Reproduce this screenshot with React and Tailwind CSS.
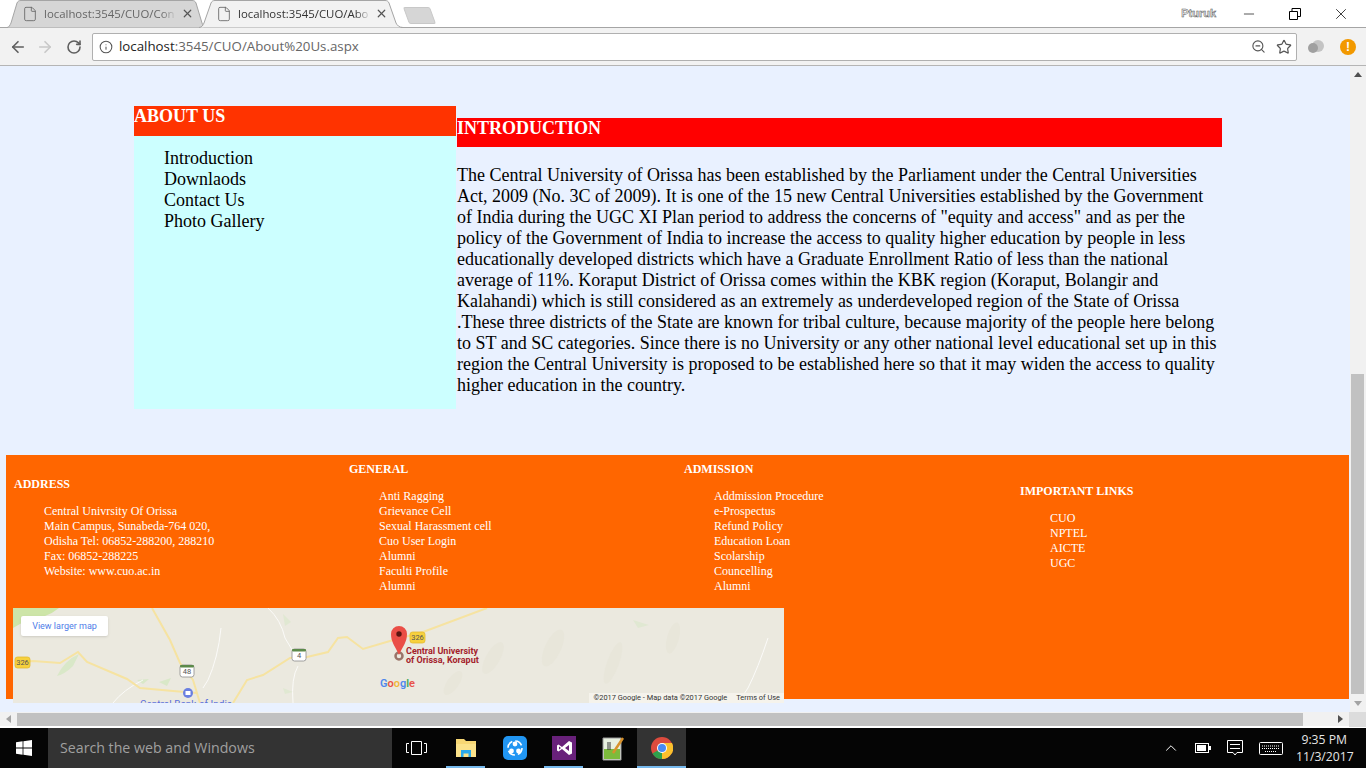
import React from 'react';
import { ArrowLeft, ArrowRight, RotateCw, Info, ZoomOut, Star, X, Minus, File, ChevronUp } from 'lucide-react';

const serif = { fontFamily: '"Liberation Serif", serif' };

const Tab = ({ title, active }) => (
  <div className={`relative flex items-center h-[27px] w-[200px] pl-[13px] pr-[15px] -mr-[6px] ${active ? 'text-[#333] z-10' : 'text-[#666]'}`}>
    <svg className="absolute top-0 -left-[4px]" width="206" height="28" viewBox="0 0 206 28">
      <path d={active
        ? 'M0 27.5 C3 27.5 4 25 5 23 L12 3 C13 1 14 0.5 16 0.5 L186 0.5 C188 0.5 189 1 190 3 L197 23 C198 25 200 27.5 204 27.5'
        : 'M2 27.5 C4 27.5 5 25 6 23 L12 3 C13 1 14 0.5 16 0.5 L187 0.5 C189 0.5 190 1 191 3 L197 23 C198 25 198 27.5 199 27.5'}
        fill={active ? '#f2f2f2' : '#d6d6d6'} stroke="#a5a5a5" />
    </svg>
    <File size={16} strokeWidth={1.3} className="relative mr-[6px] shrink-0 text-[#666]" />
    <span className="relative text-[11.4px] leading-none overflow-hidden whitespace-nowrap flex-1 font-['Open_Sans',sans-serif] [mask-image:linear-gradient(to_right,black_88%,transparent)]">{title}</span>
    <X size={13} strokeWidth={2.2} className="relative ml-[4px] shrink-0 text-[#555]" />
  </div>
);

const TabBar = () => (
  <div className="h-[28px] bg-white flex items-end pl-[9px] border-b border-[#a5a5a5]">
    <Tab title="localhost:3545/CUO/Con" />
    <Tab title="localhost:3545/CUO/Abo" active />
    <div className="ml-[9px] mb-[3px] w-[27px] h-[17px] bg-[#d6d6d6] border border-[#c8c8c8] skew-x-[20deg] rounded-[2px]" />
    <div className="ml-auto flex items-center h-[27px] self-start pr-[2px]">
      <span className="text-[11px] text-[#eee] font-bold font-['Liberation_Sans',sans-serif] mr-[10px] [-webkit-text-stroke:0.5px_#555]">Pturuk</span>
      <div className="w-[46px] flex justify-center"><Minus size={16} strokeWidth={1} className="text-black" /></div>
      <div className="w-[46px] flex justify-center">
        <svg width="12" height="12" viewBox="0 0 12 12" fill="none" stroke="#000">
          <path d="M0.5 3.5h8v8h-8z M3 3.5V0.5h8.5v8H8.5" />
        </svg>
      </div>
      <div className="w-[46px] flex justify-center"><X size={18} strokeWidth={1} className="text-black" /></div>
    </div>
  </div>
);

const ToolBar = () => (
  <div className="h-[38px] bg-[#f2f2f2] border-b border-[#b5b5b5] flex items-center pl-[9px] pr-[10px]">
    <ArrowLeft size={18} strokeWidth={2.2} className="text-[#5f5f5f]" />
    <ArrowRight size={18} strokeWidth={2.2} className="ml-[9px] text-[#c8c8c8]" />
    <RotateCw size={16} strokeWidth={2.4} className="ml-[12px] text-[#5f5f5f]" />
    <div className="ml-[10px] flex-1 h-[28px] bg-white border border-[#b0b0b0] rounded-[2px] flex items-center pl-[6px] pr-[4px]">
      <Info size={14} strokeWidth={1.8} className="text-[#555]" />
      <span className="ml-[6px] text-[13.3px] font-['Open_Sans',sans-serif] text-[#666]"><span className="text-[#222]">localhost</span>:3545/CUO/About%20Us.aspx</span>
      <ZoomOut size={15} strokeWidth={1.8} className="ml-auto text-[#555]" />
      <Star size={16} strokeWidth={1.8} className="ml-[10px] text-[#555]" />
    </div>
    <svg width="18" height="16" viewBox="0 0 18 16" className="ml-[10px]">
      <circle cx="11" cy="7" r="6" fill="#c4c4c4" />
      <circle cx="6" cy="9" r="5" fill="#a0a0a0" />
    </svg>
    <div className="ml-[15px] w-[16px] h-[16px] rounded-full bg-[#f29900] text-white text-[12px] font-bold leading-[16px] text-center font-['Liberation_Sans',sans-serif]">!</div>
  </div>
);

const introText = [
  'The Central University of Orissa has been established by the Parliament under the Central Universities',
  'Act, 2009 (No. 3C of 2009). It is one of the 15 new Central Universities established by the Government',
  'of India during the UGC XI Plan period to address the concerns of "equity and access" and as per the',
  'policy of the Government of India to increase the access to quality higher education by people in less',
  'educationally developed districts which have a Graduate Enrollment Ratio of less than the national',
  'average of 11%. Koraput District of Orissa comes within the KBK region (Koraput, Bolangir and',
  'Kalahandi) which is still considered as an extremely as underdeveloped region of the State of Orissa',
  '.These three districts of the State are known for tribal culture, because majority of the people here belong',
  'to ST and SC categories. Since there is no University or any other national level educational set up in this',
  'region the Central University is proposed to be established here so that it may widen the access to quality',
  'higher education in the country.',
];

const Sidebar = () => (
  <div className="w-[322px] h-[303px] bg-[#ccffff]">
    <div className="h-[30px] bg-[#ff3300] text-white font-bold text-[18px] leading-[21px]">ABOUT US</div>
    <ul className="pt-[12px] pl-[30px] text-[18px] leading-[21px] text-black">
      {['Introduction', 'Downlaods', 'Contact Us', 'Photo Gallery'].map(s => <li key={s}>{s}</li>)}
    </ul>
  </div>
);

const Intro = () => (
  <div className="ml-px w-[765px] mt-[12px]">
    <div className="h-[29px] bg-[#ff0000] text-white font-bold text-[18px] leading-[21px]">INTRODUCTION</div>
    <div className="pt-[18px] text-[18px] leading-[21px] text-black whitespace-nowrap">
      {introText.map(l => <div key={l}>{l}</div>)}
    </div>
  </div>
);

const FooterCol = ({ title, items, className }) => (
  <div className={className}>
    <div className="font-bold">{title}</div>
    <ul className="pl-[30px] pt-[12px]">
      {items.map((s, i) => <li key={i}>{s}</li>)}
    </ul>
  </div>
);

const Shield = ({ x, y, w, h, label, yellow }) => (
  <g>
    <rect x={x} y={y} width={w} height={h} rx="2.5" fill={yellow ? '#f7d13d' : '#fff'} stroke={yellow ? '#e3b92e' : '#8a8a8a'} strokeWidth="0.8" />
    {!yellow && <rect x={x} y={y} width={w} height="2.5" rx="1" fill="#5c8a4a" />}
    <text x={x + w / 2} y={y + h - 3} textAnchor="middle" fontSize="7.5" fill="#555" fontFamily="Roboto, sans-serif">{label}</text>
  </g>
);

const MapImage = () => (
  <div className="relative w-[771px] h-[95px] overflow-hidden bg-[#ebe9df]">
    <svg width="771" height="95" viewBox="0 0 771 95" className="absolute inset-0">
      <path d="M0 0 H46 Q34 10 14 12 L0 20Z" fill="#cde5a8" />
      <path d="M44 68 Q52 52 66 46 L60 58 Q52 66 44 68Z M124 72 L136 71 L130 76Z M146 74 L158 70 L154 78Z" fill="#d9e8c8" />
      <path d="M270 6 L278 14 L272 18Z M620 12 L636 17 L625 20Z M270 80 L280 84 L272 86Z" fill="#e0e8d2" />
      <g fill="#e8e6da">
        <ellipse cx="540" cy="40" rx="8" ry="20" transform="rotate(25 540 40)" />
        <ellipse cx="600" cy="55" rx="6" ry="22" transform="rotate(20 600 55)" />
        <ellipse cx="480" cy="50" rx="7" ry="18" transform="rotate(30 480 50)" />
        <ellipse cx="660" cy="30" rx="6" ry="16" transform="rotate(15 660 30)" />
        <ellipse cx="440" cy="75" rx="6" ry="14" transform="rotate(35 440 75)" />
      </g>
      <g fill="none" stroke="#fff" strokeWidth="1" opacity="0.8">
        <path d="M255 0 Q268 12 272 30 Q278 40 284 50" />
        <path d="M208 20 Q205 50 195 72 L190 80" />
        <path d="M755 30 Q745 60 735 80 L725 95" />
        <path d="M100 95 Q110 82 130 72" />
        <path d="M280 95 Q278 70 285 58" />
      </g>
      <g fill="none" stroke="#f6e3a1" strokeWidth="2">
        <path d="M9 54 L20 53 L47 55 L65 44 L74 54 L114 71 L127 80 L160 83 L184 85" />
        <path d="M139 0 L157 32 L167 55 L180 72 L187 95" />
        <path d="M220 95 L234 72 L250 67 L277 50 L294 49 L315 44 L325 30 L334 29 L350 41 L377 33 L410 24 L474 0" />
      </g>
      <Shield x={2} y={49} w={15} h={11} label="326" yellow />
      <Shield x={167} y={57} w={14} h={12} label="48" />
      <Shield x={279} y={41} w={14} h={12} label="4" />
      <Shield x={397} y={24} w={15} h={11} label="326" yellow />
      <circle cx="175" cy="85" r="5" fill="#6a7fe0" />
      <rect x="172.5" y="83" width="5" height="4" fill="#fff" />
      <circle cx="386" cy="48" r="3.5" fill="none" stroke="#9a7468" strokeWidth="2.5" />
      <path d="M386 47 C382 38 378 34 378 26 A8 8 0 0 1 394 26 C394 34 390 38 386 47Z" fill="#ea4e46" />
      <circle cx="386" cy="26" r="2.7" fill="#5a1510" />
    </svg>
    <div className="absolute left-[8px] top-[8px] w-[87px] h-[20px] bg-white rounded-[2px] shadow-sm text-[9px] leading-[20px] text-center text-[#4f7de8] font-['Roboto',sans-serif]">View larger map</div>
    <div className="absolute left-[393px] top-[39px] text-[9px] leading-[9px] font-bold text-[#a3222c] font-['Roboto',sans-serif] whitespace-nowrap">Central University<br />of Orissa, Koraput</div>
    <div className="absolute left-[367px] top-[70px] text-[11px] leading-none font-semibold font-['Roboto',sans-serif]">
      <span className="text-[#4f87ec]">G</span><span className="text-[#e8534a]">o</span><span className="text-[#f2b83a]">o</span><span className="text-[#4f87ec]">g</span><span className="text-[#47a85c]">l</span><span className="text-[#e8534a]">e</span>
    </div>
    <div className="absolute right-0 bottom-0 h-[10px] pl-[4px] pr-[4px] bg-[#f5f3ec] text-[7.4px] leading-[10px] text-[#333] font-['Roboto',sans-serif] whitespace-nowrap flex gap-[9px]">
      <span>©2017 Google - Map data ©2017 Google</span><span>Terms of Use</span>
    </div>
    <div className="absolute left-[127px] top-[92px] text-[10px] leading-none text-[#5a6fdc] font-['Roboto',sans-serif]">Central Bank of India</div>
  </div>
);

const Footer = () => (
  <div className="mt-[46px] ml-[6px] w-[1343px] h-[244px] bg-[#ff6600] text-white text-[12px] leading-[15px] relative">
    <div className="flex">
      <FooterCol className="w-[343px] pl-[8px] pt-[22px]" title="ADDRESS" items={['Central Univrsity Of Orissa', 'Main Campus, Sunabeda-764 020,', 'Odisha Tel: 06852-288200, 288210', 'Fax: 06852-288225', 'Website: www.cuo.ac.in']} />
      <FooterCol className="w-[335px] pt-[7px]" title="GENERAL" items={['Anti Ragging', 'Grievance Cell', 'Sexual Harassment cell', 'Cuo User Login', 'Alumni', 'Faculti Profile', 'Alumni']} />
      <FooterCol className="w-[336px] pt-[7px]" title="ADMISSION" items={['Addmission Procedure', 'e-Prospectus', 'Refund Policy', 'Education Loan', 'Scolarship', 'Councelling', 'Alumni']} />
      <FooterCol className="pt-[29px]" title="IMPORTANT LINKS" items={['CUO', 'NPTEL', 'AICTE', 'UGC']} />
    </div>
    <div className="absolute left-[7px] top-[153px]"><MapImage /></div>
  </div>
);

const VScrollbar = () => (
  <div className="w-[16px] bg-[#f1f1f1] flex flex-col">
    <div className="h-[17px] w-full flex items-center justify-center">
      <svg width="8" height="5" viewBox="0 0 8 5"><path d="M4 0L8 5H0Z" fill="#505050" /></svg>
    </div>
    <div className="mt-[291px] ml-px w-[13px] h-[320px] bg-[#c1c1c1]" />
    <div className="mt-auto h-[18px] w-full flex items-center justify-center">
      <svg width="8" height="5" viewBox="0 0 8 5"><path d="M0 0H8L4 5Z" fill="#a3a3a3" /></svg>
    </div>
  </div>
);

const HScrollbar = () => (
  <div className="h-[16px] bg-white flex">
    <div className="flex-1 h-[14px] bg-[#f1f1f1] flex items-center">
      <div className="w-[17px] flex justify-center">
        <svg width="5" height="8" viewBox="0 0 5 8"><path d="M5 0V8L0 4Z" fill="#a3a3a3" /></svg>
      </div>
      <div className="w-[1286px] h-[13px] bg-[#c1c1c1]" />
      <div className="ml-[29px] w-[16px] flex justify-center">
        <svg width="5" height="8" viewBox="0 0 5 8"><path d="M0 0V8L5 4Z" fill="#505050" /></svg>
      </div>
    </div>
    <div className="w-[17px] h-[15px] bg-[#dcdcdc]" />
  </div>
);

const TaskIcon = ({ children, underline, active }) => (
  <div className={`w-[49px] h-[40px] flex items-center justify-center relative ${active ? 'bg-[#333]' : ''}`}>
    {children}
    {underline && <div className={`absolute bottom-0 h-[2px] bg-[#76b9ed] ${active ? 'inset-x-0' : 'inset-x-[5px]'}`} />}
  </div>
);

const Taskbar = () => (
  <div className="h-[40px] bg-[#050505] flex items-center text-white">
    <div className="w-[48px] flex justify-center">
      <svg width="16" height="16" viewBox="0 0 16 16" fill="#fff"><path d="M0 2.3L6.6 1.3V7.6H0Z M7.4 1.2L16 0V7.6H7.4Z M0 8.4H6.6V14.7L0 13.7Z M7.4 8.4H16V16L7.4 14.8Z" /></svg>
    </div>
    <div className="w-[344px] h-full bg-[#333] pl-[12px] flex items-center text-[14.2px] text-[#a0a0a0] font-['Open_Sans',sans-serif]">Search the web and Windows</div>
    <div className="w-[49px] flex justify-center">
      <svg width="21" height="14" viewBox="0 0 21 14" fill="none" stroke="#fff"><path d="M5.5 0.5h10v13h-10z M3 2.5H0.5v9H3 M18 2.5h2.5v9H18" /></svg>
    </div>
    <TaskIcon underline>
      <svg width="22" height="20" viewBox="0 0 22 20"><path d="M1 1h8l2 2h10v15H1Z" fill="#f7d774" /><path d="M1 6h20v13H1Z" fill="#fbe28a" /><path d="M6 12h10v7h-2.5v-3.5h-5V19H6Z" fill="#29a8ea" /></svg>
    </TaskIcon>
    <TaskIcon>
      <div className="w-[24px] h-[24px] rounded-[5px] bg-[#2196f3] flex items-center justify-center">
        <svg width="18" height="18" viewBox="0 0 18 18" fill="none" stroke="#fff" strokeWidth="1.6"><circle cx="9" cy="9" r="7" strokeDasharray="8 3" /><circle cx="9" cy="5" r="1.6" fill="#fff" /><circle cx="5.5" cy="12" r="1.6" fill="#fff" /><circle cx="12.5" cy="12" r="1.6" fill="#fff" /></svg>
      </div>
    </TaskIcon>
    <TaskIcon underline>
      <svg width="24" height="24" viewBox="0 0 24 24"><rect width="24" height="24" fill="#68217a" /><path d="M17 5L10 11 6.5 8.5 5 9.5V14.5L6.5 15.5 10 13 17 19 20 17.5V6.5Z M17 9V15L13 12Z M7 10.5L9 12 7 13.5Z" fill="#fff" fillRule="evenodd" /></svg>
    </TaskIcon>
    <TaskIcon>
      <svg width="24" height="26" viewBox="0 0 24 26"><path d="M2 3H20V25H2Z" fill="#e8f0e0" stroke="#999" /><path d="M3 14H19V24H3Z" fill="#7dbb3c" /><path d="M7 7V15 M9 7V15" stroke="#333" /><path d="M12 18L22 3" stroke="#d8922c" strokeWidth="2.5" /></svg>
    </TaskIcon>
    <TaskIcon underline active>
      <svg width="22" height="22" viewBox="0 0 22 22">
        <circle cx="11" cy="11" r="11" fill="#dd4b3e" />
        <path d="M11 11L1.5 16.5A11 11 0 0 0 13 21.8Z" fill="#2fa04c" />
        <path d="M11 6H21A11 11 0 0 1 11 22Z" fill="#fbc02d" />
        <circle cx="11" cy="11" r="5" fill="#fff" />
        <circle cx="11" cy="11" r="4" fill="#4a8af4" />
      </svg>
    </TaskIcon>
    <div className="ml-auto flex items-center h-full pr-[14px]">
      <ChevronUp size={18} strokeWidth={1.3} className="mr-[15px]" />
      <svg width="16" height="10" viewBox="0 0 16 10" fill="none" className="mr-[16px]"><rect x="0.5" y="0.5" width="13" height="9" stroke="#fff" /><rect x="2" y="2" width="9" height="6" fill="#fff" /><rect x="14" y="3" width="2" height="4" fill="#fff" /></svg>
      <svg width="16" height="16" viewBox="0 0 16 16" fill="none" stroke="#fff" className="mr-[16px]"><path d="M0.5 0.5H15.5V12.5H10L8 15L6 12.5H0.5Z M3 4.5H13 M3 8.5H13" /></svg>
      <svg width="24" height="13" viewBox="0 0 24 13" fill="none" stroke="#fff" className="mr-[13px]"><rect x="0.5" y="0.5" width="23" height="12" rx="1" /><path d="M3 4H21 M3 6.5H21 M6 9.5H18" strokeDasharray="1 1" /></svg>
      <div className="w-[56px] text-right text-[12.2px] leading-[17px] text-[#e6e6e6] font-['Open_Sans',sans-serif]">
        <div className="pr-[5px]">9:35 PM</div>
        <div className="whitespace-nowrap">11/3/2017</div>
      </div>
    </div>
  </div>
);

export default function App() {
  return (
    <div className="w-[1366px] h-[768px] overflow-hidden flex flex-col bg-white">
      <TabBar />
      <ToolBar />
      <div className="flex flex-1 min-h-0">
        <div className="flex-1 min-w-0 bg-[#e9f1ff] overflow-hidden" style={serif}>
          <div className="flex pt-[40px] pl-[134px]">
            <Sidebar />
            <Intro />
          </div>
          <Footer />
        </div>
        <VScrollbar />
      </div>
      <HScrollbar />
      <Taskbar />
    </div>
  );
}
